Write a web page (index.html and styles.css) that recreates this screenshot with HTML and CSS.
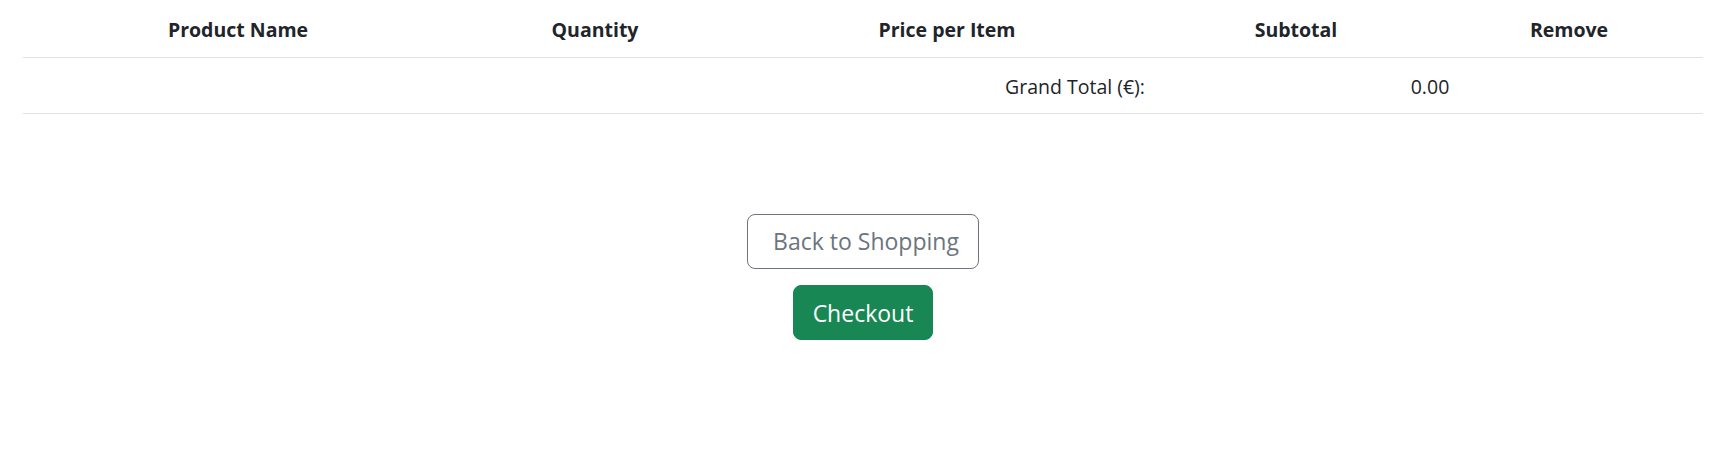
FILE: index.html
```html
<!DOCTYPE html>
<html lang="en">
<head>
<meta charset="utf-8">
<title>Cart</title>
<link rel="stylesheet" href="styles.css">
</head>
<body>
<main class="page">
  <table class="cart">
    <colgroup>
      <col class="c1"><col class="c2"><col class="c3"><col class="c4"><col class="c5">
    </colgroup>
    <thead>
      <tr>
        <th>Product Name</th>
        <th>Quantity</th>
        <th>Price per Item</th>
        <th>Subtotal</th>
        <th>Remove</th>
      </tr>
    </thead>
    <tbody>
      <tr>
        <td colspan="3" class="label">Grand Total (€):</td>
        <td colspan="2" class="total">0.00</td>
      </tr>
    </tbody>
  </table>
  <div class="actions">
    <button class="btn btn-back" type="button">Back to Shopping</button>
    <button class="btn btn-checkout" type="button">Checkout</button>
  </div>
</main>
</body>
</html>
```

FILE: styles.css
```css
html, body {
  margin: 0;
  padding: 0;
  background: #ffffff;
}
body {
  font-family: "Open Sans", "Noto Sans", "Liberation Sans", sans-serif;
  color: #212529;
}
.page {
  padding: 0 14px 0 23px;
}
.cart {
  width: 100%;
  border-collapse: collapse;
  table-layout: fixed;
}
.c1 { width: 430px; }
.c2 { width: 284px; }
.c3 { width: 420px; }
.c4 { width: 278px; }
.c5 { width: 268px; }
.cart th {
  font-size: 19.5px;
  font-weight: 700;
  line-height: 30px;
  padding: 15px 12px 12px;
  text-align: center;
  border-bottom: 1px solid #dee2e6;
}
.cart td {
  font-size: 19.5px;
  line-height: 30px;
  padding: 14px 12px 11px;
  border-bottom: 1px solid #dee2e6;
}
.cart td.label {
  text-align: right;
}
.cart td.total {
  text-align: center;
}
.actions {
  display: flex;
  flex-direction: column;
  align-items: center;
  gap: 16px;
  margin-top: 100px;
}
.btn {
  font-family: inherit;
  font-size: 23px;
  line-height: 35px;
  border-radius: 8px;
  cursor: pointer;
}
.btn-back {
  background: #ffffff;
  color: #6c757d;
  border: 1px solid #6c757d;
  padding: 9px 19px 9px 25px;
}
.btn-checkout {
  background: #198754;
  color: #ffffff;
  border: 1px solid #198754;
  padding: 10px 19px 8px;
}
```
